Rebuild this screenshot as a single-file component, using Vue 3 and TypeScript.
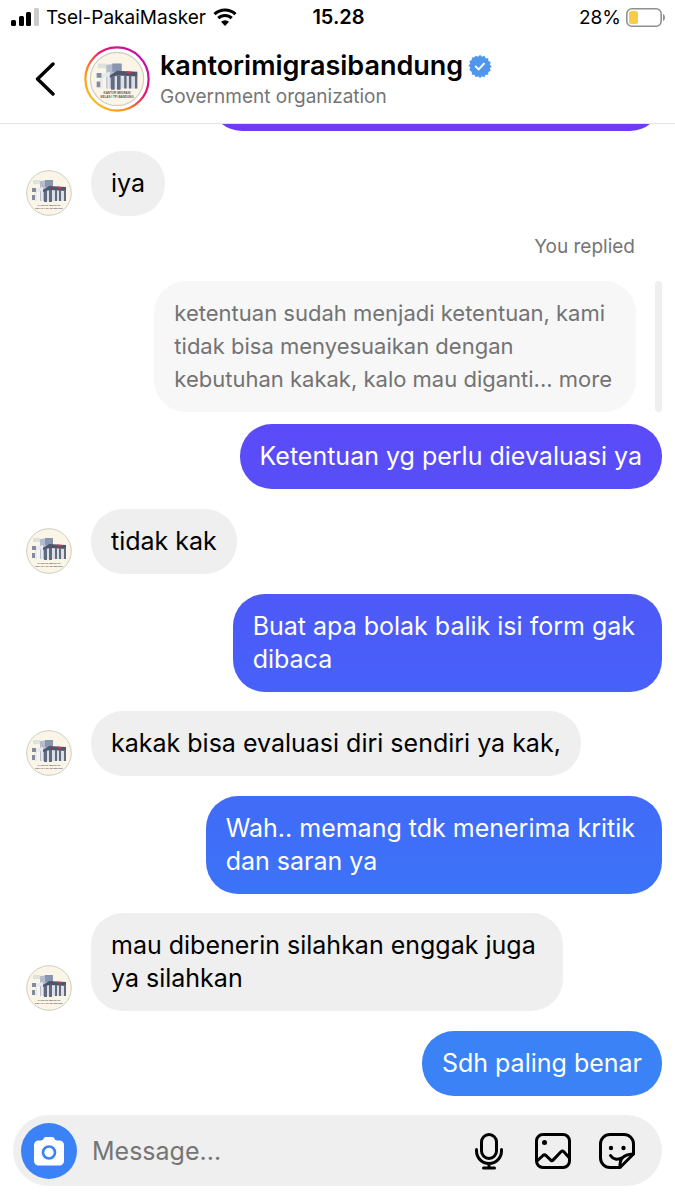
<script setup lang="ts">
interface Message {
  id: number
  from: 'them' | 'me'
  text: string
  tone?: string
}

const account = { name: 'kantorimigrasibandung', kind: 'Government organization' }

const reply = {
  label: 'You replied',
  quote: 'ketentuan sudah menjadi ketentuan, kami\ntidak bisa menyesuaikan dengan\nkebutuhan kakak, kalo mau diganti... more',
  text: 'Ketentuan yg perlu dievaluasi ya',
}

const messages: Message[] = [
  { id: 1, from: 'them', text: 'tidak kak' },
  { id: 2, from: 'me', text: 'Buat apa bolak balik isi form gak \ndibaca', tone: 'indigo' },
  { id: 3, from: 'them', text: 'kakak bisa evaluasi diri sendiri ya kak,' },
  { id: 4, from: 'me', text: 'Wah.. memang tdk menerima kritik \ndan saran ya', tone: 'blue' },
  { id: 5, from: 'them', text: 'mau dibenerin silahkan enggak juga \nya silahkan' },
  { id: 6, from: 'me', text: 'Sdh paling benar', tone: 'sky' },
]
</script>

<template>
  <svg class="defs" aria-hidden="true">
    <defs>
      <linearGradient id="ring" x1="0.1" y1="0.9" x2="0.9" y2="0.1">
        <stop offset="0" stop-color="#fdc21a" />
        <stop offset="0.3" stop-color="#fb8a1e" />
        <stop offset="0.6" stop-color="#ec1766" />
        <stop offset="1" stop-color="#b90fb5" />
      </linearGradient>
      <symbol id="seal" viewBox="0 0 92 92">
        <g transform="scale(2)">
          <circle cx="23" cy="23" r="22.3" fill="#faf5e6" stroke="#cfccc3" stroke-width="1" />
          <path d="M7 10h7v4H7z" fill="#dde3da" />
          <path d="M14 11l11-1v21H14z" fill="#b3bdcf" />
          <path d="M19 10h8v7h-8z" fill="#8a96b0" />
          <path d="M9 19l8-2v14l-2 1V21l-4 1v9H9z" fill="#e6e9f0" />
          <path d="M6 18h4v4H6zM6 25h3v5H6z" fill="#828ba0" />
          <path d="M21 21h19v10H21z" fill="#dcdfe6" />
          <path d="M17 20l6-4 17 1v4l-17-1-6 2z" fill="#50556b" />
          <path d="M31 16.500l4 .5v1.500l-4-.5z" fill="#d6324b" />
          <path d="M18 21h3v11h-3zM23 20h3v12h-3zM29 20h2v11h-2zM33 20h2v11h-2zM38 20h2v11h-2z" fill="#626a80" />
        </g>
        <text x="46" y="71" class="seal-text">KANTOR IMIGRASI</text>
        <text x="46" y="77" class="seal-text">KELAS I TPI BANDUNG</text>
      </symbol>
    </defs>
  </svg>

  <main class="screen">
    <div class="status">
      <div class="carrier">
        <svg class="signal" viewBox="0 0 28 18" aria-hidden="true">
          <rect x="0" y="12" width="5" height="6" rx="1.5" />
          <rect x="8" y="8" width="5" height="10" rx="1.5" />
          <rect x="15" y="4" width="5" height="14" rx="1.5" />
          <rect x="23" y="0" width="5" height="18" rx="1.5" fill="#cbcbcb" />
        </svg>
        <span>Tsel-PakaiMasker</span>
        <svg class="wifi" viewBox="0 0 24 18" aria-hidden="true">
          <path d="M1.500 6.200a15.200 15.200 0 0 1 21 0M5.300 10.200a9.600 9.600 0 0 1 13.400 0" fill="none" stroke="#000" stroke-width="3.2" />
          <path d="M12 18l-4-4.200a5.700 5.700 0 0 1 8 0z" />
        </svg>
      </div>
      <time class="clock">15.28</time>
      <div class="power">
        <span>28%</span>
        <svg class="battery" viewBox="0 0 40 19" aria-hidden="true">
          <rect x="0.8" y="0.8" width="34.4" height="17.4" rx="5" fill="none" stroke="#8f8f8f" stroke-width="1.6" />
          <rect x="3" y="3" width="9" height="13" rx="2.5" fill="#f7cc46" />
          <path d="M37 6c2.600.8 2.600 6.200 0 7z" fill="#8f8f8f" />
        </svg>
      </div>
    </div>

    <header class="header">
      <button class="back" type="button" aria-label="Back">
        <svg viewBox="0 0 20 34" aria-hidden="true">
          <path d="M18 2L2.500 17 18 32" fill="none" stroke="#000" stroke-width="3.4" stroke-linecap="round" stroke-linejoin="round" />
        </svg>
      </button>
      <svg class="portrait" viewBox="0 0 66 66" aria-hidden="true">
        <circle cx="33" cy="33" r="31.6" fill="#fff" stroke="url(#ring)" stroke-width="2.2" />
        <use href="#seal" x="5.5" y="5.5" width="55" height="55" />
      </svg>
      <div class="identity">
        <h1 class="name">
          {{ account.name }}
          <svg class="verified" viewBox="0 0 24 24" role="img" aria-label="Verified">
            <path d="M12 0.500l2 2 2.700-1 1.200 2.600 2.900.1.100 2.900 2.600 1.200-1 2.700 2 2-2 2 1 2.700-2.600 1.200-.1 2.900-2.900.1-1.200 2.600-2.700-1-2 2-2-2-2.700 1-1.200-2.600-2.900-.1-.1-2.900L.5 16.700l1-2.700-2-2 2-2-1-2.700 2.600-1.200.1-2.900 2.900-.1L7.300 1.500l2.700 1z" fill="#4f97ec" transform="translate(.9 .4) scale(.93)" />
            <path d="M7.200 12l3.500 3.400 5.800-6.300" fill="none" stroke="#fff" stroke-width="2" />
          </svg>
        </h1>
        <p class="kind">{{ account.kind }}</p>
      </div>
    </header>

    <section class="thread" aria-label="Messages">
      <div class="row me earlier"><p class="bubble violet"></p></div>

      <div class="row them">
        <svg class="avatar" aria-hidden="true"><use href="#seal" /></svg>
        <p class="bubble">iya</p>
      </div>

      <div class="reply">
        <span class="reply-label">{{ reply.label }}</span>
        <div class="quote">
          <blockquote class="bubble quoted">{{ reply.quote }}</blockquote>
          <span class="quote-bar"></span>
        </div>
        <p class="bubble purple">{{ reply.text }}</p>
      </div>

      <div v-for="message in messages" :key="message.id" class="row" :class="message.from">
        <svg v-if="message.from === 'them'" class="avatar" aria-hidden="true"><use href="#seal" /></svg>
        <p class="bubble" :class="message.tone">{{ message.text }}</p>
      </div>
    </section>

    <form class="composer" @submit.prevent>
      <button class="camera" type="button" aria-label="Camera">
        <svg viewBox="0 0 30 30" aria-hidden="true">
          <path d="M9.500 2.800C10.200 1.400 11 1 12.300 1h5.400c1.300 0 2.100.4 2.800 1.800.6 1.200 1.200 1.700 2.500 1.700h2.500A4.500 4.500 0 0 1 30 9v16a4.500 4.500 0 0 1-4.500 4.500h-21A4.500 4.500 0 0 1 0 25V9a4.500 4.500 0 0 1 4.500-4.500H7c1.300 0 1.900-.5 2.500-1.700z" fill="#fff" />
          <circle cx="15" cy="16.500" r="6" fill="#fff" stroke="#3b82f6" stroke-width="2.6" />
        </svg>
      </button>
      <input class="field" type="text" placeholder="Message..." aria-label="Message" />
      <button class="tool" type="button" aria-label="Record voice message">
        <svg viewBox="0 0 38 38" fill="none" stroke="#000" stroke-width="3" stroke-linecap="round" aria-hidden="true">
          <rect x="11.5" y="2.5" width="15" height="24" rx="7.5" />
          <path d="M6.500 17.500v1.500a12.500 12.500 0 0 0 25 0v-1.500M19 31.500v4M13.500 36h11" />
        </svg>
      </button>
      <button class="tool" type="button" aria-label="Send photo">
        <svg viewBox="0 0 38 38" fill="none" stroke="#000" stroke-width="3" stroke-linejoin="round" aria-hidden="true">
          <rect x="2.5" y="2.5" width="33" height="33" rx="6.5" />
          <path d="M3 29l6-5.500q1.500-1.300 3 0l5 4.800q1 .9 2-.2l8-8.300q1.500-1.500 2.800 0L35 25.500" />
          <circle cx="10.500" cy="10.500" r="2.5" fill="#000" stroke="none" />
        </svg>
      </button>
      <button class="tool" type="button" aria-label="Send sticker">
        <svg viewBox="0 0 38 38" fill="none" stroke="#000" stroke-width="3" stroke-linecap="round" stroke-linejoin="round" aria-hidden="true">
          <path d="M22 35.500H12A9.500 9.500 0 0 1 2.500 26V12A9.500 9.500 0 0 1 12 2.500h14A9.500 9.500 0 0 1 35.500 12v10L22 35.500z" />
          <path d="M22 35c-.5-8 3-12.500 13-13M12.500 23.500c2.500 4 7 4.500 11 2.500" />
          <circle cx="13" cy="16" r="2.2" fill="#000" stroke="none" />
          <circle cx="25.500" cy="16" r="2.2" fill="#000" stroke="none" />
        </svg>
      </button>
    </form>
  </main>
</template>

<style>
body {
  margin: 0;
  background: #fff;
}
</style>

<style scoped>
.screen {
  display: flex;
  flex-direction: column;
  min-height: 100vh;
  box-sizing: border-box;
  padding-bottom: 14px;
  background: #fff;
  color: #000;
  font-family: Inter, "Liberation Sans", sans-serif;
}

.defs {
  position: absolute;
  width: 0;
  height: 0;
}

.seal-text {
  font-family: "Liberation Sans", sans-serif;
  font-size: 5px;
  font-weight: 700;
  text-anchor: middle;
  fill: #55565a;
}

p,
h1,
blockquote {
  margin: 0;
}

button {
  display: flex;
  align-items: center;
  justify-content: center;
  flex: none;
  padding: 0;
  border: 0;
  background: none;
}

.status {
  display: grid;
  grid-template-columns: 1fr auto 1fr;
  align-items: center;
  height: 34px;
  padding: 0 9px 0 11px;
  font-size: 19px;
}

.carrier,
.power {
  display: flex;
  align-items: center;
}

.carrier {
  gap: 7px;
}

.power {
  justify-content: flex-end;
  gap: 5px;
}

.signal {
  width: 28px;
  height: 18px;
}

.wifi {
  width: 24px;
  height: 18px;
}

.battery {
  width: 40px;
  height: 19px;
}

.clock {
  font-size: 20px;
  font-weight: 600;
}

.header {
  display: flex;
  align-items: center;
  height: 89px;
  padding-left: 35px;
  border-bottom: 1px solid #e3e3e3;
}

.back svg {
  width: 20px;
  height: 34px;
}

.portrait {
  flex: none;
  width: 66px;
  height: 66px;
  margin-left: 29px;
}

.identity {
  padding-top: 4px;
  margin-left: 10px;
}

.name {
  display: flex;
  align-items: center;
  gap: 5px;
  font-size: 27px;
  font-weight: 600;
  line-height: 32px;
}

.verified {
  width: 24px;
  height: 24px;
}

.kind {
  color: #757575;
  font-size: 19px;
  line-height: 30px;
}

.thread {
  display: flex;
  flex: 1;
  flex-direction: column;
  justify-content: space-between;
  overflow: hidden;
  padding: 0 13px 19px 26px;
}

.row {
  display: flex;
  align-items: flex-end;
}

.me {
  justify-content: flex-end;
}

.earlier {
  margin-top: -58px;
}

.avatar {
  flex: none;
  width: 46px;
  height: 46px;
  margin-right: 19px;
}

.bubble {
  box-sizing: border-box;
  min-height: 65px;
  padding: 16px 20px;
  border-radius: 32px;
  background: #efefef;
  font-size: 25px;
  line-height: 33px;
  white-space: break-spaces;
}

.violet,
.purple,
.indigo,
.blue,
.sky {
  color: #fff;
}

.violet {
  width: 71%;
  background: #6f39f8;
}

.purple {
  background: linear-gradient(#5c4af8, #574ff8);
}

.indigo {
  background: linear-gradient(#4e59f8, #4761f9);
}

.blue {
  background: linear-gradient(#416bf8, #3c73f8);
}

.sky {
  background: #3b82f6;
}

.reply {
  display: flex;
  flex-direction: column;
  align-items: flex-end;
}

.reply-label {
  margin: 0 27px 22px 0;
  color: #757575;
  font-size: 19px;
  line-height: 24px;
}

.quote {
  display: flex;
  gap: 19px;
  margin-bottom: 12px;
}

.quoted {
  padding-right: 24px;
  background: #f7f7f7;
  color: #737373;
  font-size: 22px;
}

.quote-bar {
  width: 7px;
  border-radius: 4px;
  background: #efefef;
}

.composer {
  display: flex;
  align-items: center;
  height: 71px;
  margin: 0 13px;
  padding: 0 26px 0 8px;
  border-radius: 36px;
  background: #efefef;
}

.camera {
  width: 56px;
  height: 56px;
  border-radius: 50%;
  background: #3b82f6;
}

.camera svg {
  width: 30px;
  height: 30px;
}

.field {
  flex: 1;
  min-width: 0;
  padding: 0 0 0 15px;
  border: 0;
  outline: 0;
  background: none;
  color: #000;
  font: inherit;
  font-size: 25px;
}

.field::placeholder {
  color: #757575;
  opacity: 1;
}

.tool + .tool {
  margin-left: 26px;
}

.tool svg {
  width: 38px;
  height: 38px;
}
</style>
